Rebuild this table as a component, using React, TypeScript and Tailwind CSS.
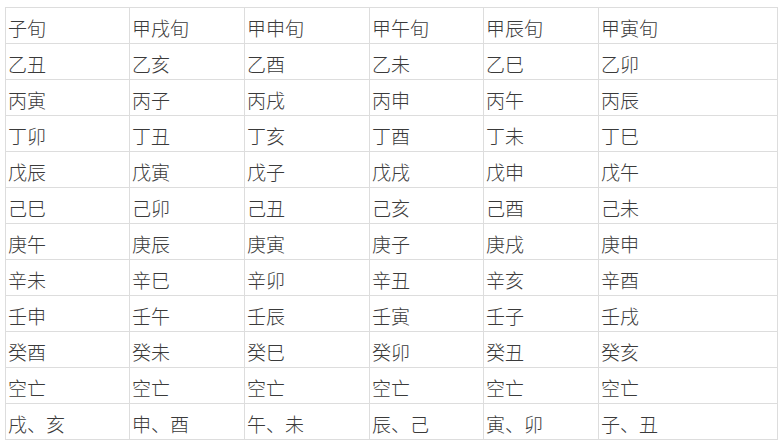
import React from 'react';

const columns: string[][] = [
  ['子旬', '乙丑', '丙寅', '丁卯', '戊辰', '己巳', '庚午', '辛未', '壬申', '癸酉', '空亡', '戌、亥'],
  ['甲戌旬', '乙亥', '丙子', '丁丑', '戊寅', '己卯', '庚辰', '辛巳', '壬午', '癸未', '空亡', '申、酉'],
  ['甲申旬', '乙酉', '丙戌', '丁亥', '戊子', '己丑', '庚寅', '辛卯', '壬辰', '癸巳', '空亡', '午、未'],
  ['甲午旬', '乙未', '丙申', '丁酉', '戊戌', '己亥', '庚子', '辛丑', '壬寅', '癸卯', '空亡', '辰、己'],
  ['甲辰旬', '乙巳', '丙午', '丁未', '戊申', '己酉', '庚戌', '辛亥', '壬子', '癸丑', '空亡', '寅、卯'],
  ['甲寅旬', '乙卯', '丙辰', '丁巳', '戊午', '己未', '庚申', '辛酉', '壬戌', '癸亥', '空亡', '子、丑'],
];

const widths = ['w-[124px]', 'w-[115px]', 'w-[125px]', 'w-[114px]', 'w-[115px]', 'w-[179px]'];

const App: React.FC = () => {
  const rows = columns[0].map((_, r) => columns.map((col) => col[r]));

  return (
    <div className="pl-[5px] pt-[7px] bg-white min-h-screen">
      <table
        className="border-collapse table-fixed text-[19px] font-light text-[#3a3a3a]"
        style={{ fontFamily: '"Noto Sans CJK SC", "Noto Sans", sans-serif' }}
      >
        <colgroup>
          {widths.map((w, i) => (
            <col key={i} className={w} />
          ))}
        </colgroup>
        <tbody>
          {rows.map((row, r) => (
            <tr key={r} className="h-[36px]">
              {row.map((cell, c) => (
                <td
                  key={c}
                  className="border border-[#dddddd] pl-[2px] pt-[3px] align-middle leading-none whitespace-nowrap"
                >
                  {cell}
                </td>
              ))}
            </tr>
          ))}
        </tbody>
      </table>
    </div>
  );
};

export default App;
